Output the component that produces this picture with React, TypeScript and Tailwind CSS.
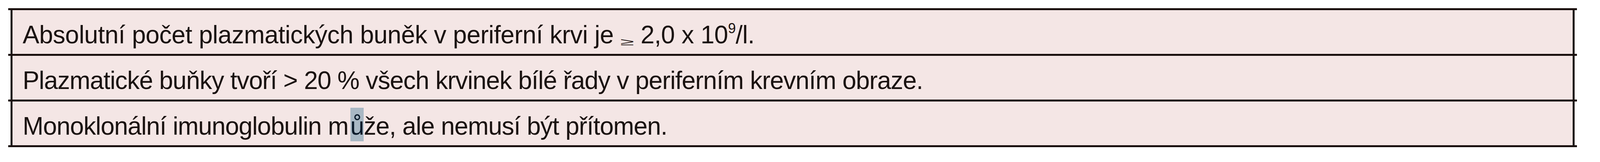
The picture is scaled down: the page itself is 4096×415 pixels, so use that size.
const rule = 'h-[5px] bg-[#1a100e]';
const row =
  'mx-[6px] h-[112px] border-x-[5px] border-[#1a100e] bg-[#f4e6e5] pl-[26px] pt-[31px] text-[64px] leading-[64px] text-[#1a1210] whitespace-nowrap';

export default function App() {
  return (
    <div className="w-[4096px] h-[415px] bg-white pt-[21px] pl-[21px] font-['Liberation_Sans',Arial,sans-serif]">
      <div className="w-[4016px]">
        <div className={rule} />
        <div className={`${row} tracking-[-0.5px]`}>
          Absolutní počet plazmatických buněk v periferní krvi je{' '}
          <span className="inline-block origin-[50%_54px] scale-y-[0.4] translate-y-[5px]">≥</span> 2,0 x 10
          <span className="text-[36px] leading-[0] align-[26px]">9</span>/l.
        </div>
        <div className={rule} />
        <div className={`${row} tracking-[-1.1px]`}>
          Plazmatické buňky tvoří &gt; 20 % všech krvinek bílé řady v periferním krevním obraze.
        </div>
        <div className={rule} />
        <div className={`${row} tracking-[-1.1px]`}>
          Monoklonální imunoglobulin m
          <span className="ml-[5px] bg-[#a9b8c4] text-[#0a1a2a] pt-[11px] pb-[3px]">ů</span>
          že, ale nemusí být přítomen.
        </div>
        <div className={rule} />
      </div>
    </div>
  );
}
